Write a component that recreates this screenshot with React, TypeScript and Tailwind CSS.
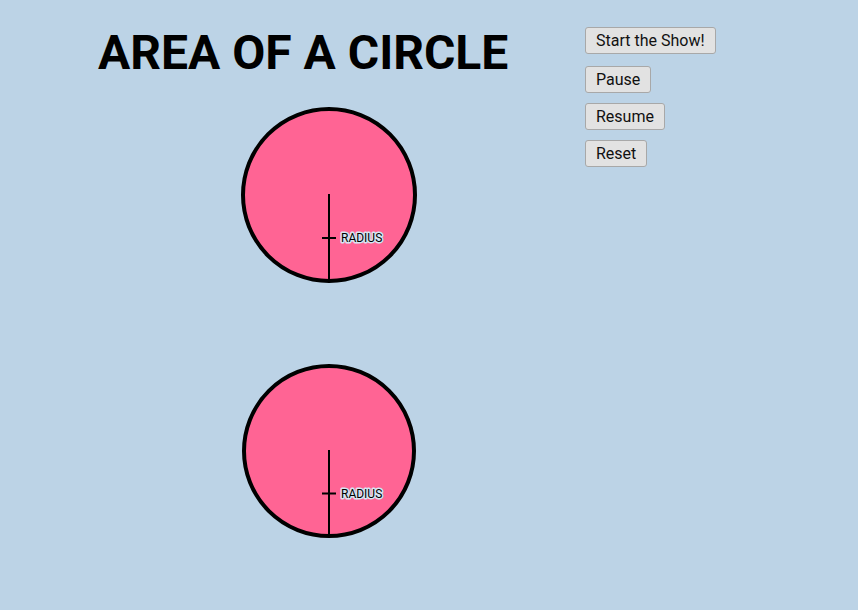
import React from 'react';

const Circle: React.FC<{ cy: number; r: number; cx: number }> = ({ cx, cy, r }) => {
  const tickY = cy + r / 2;
  return (
    <g>
      <circle cx={cx} cy={cy} r={r} fill="#ff6494" stroke="#000" strokeWidth={4} />
      <line x1={cx} y1={cy - 1} x2={cx} y2={cy + r} stroke="#000" strokeWidth={2} />
      <line x1={cx - 7} y1={tickY} x2={cx + 7} y2={tickY} stroke="#000" strokeWidth={2} />
      <text
        x={cx + 12}
        y={tickY + 4}
        fontSize={12}
        fontFamily="Roboto, 'Liberation Sans', sans-serif"
        fill="#000"
        stroke="#d6e5f1"
        strokeWidth={3}
        strokeLinejoin="round"
        paintOrder="stroke"
      >
        RADIUS
      </text>
    </g>
  );
};

const App: React.FC = () => {
  const buttons = [
    { label: 'Start the Show!', gap: 'mt-0' },
    { label: 'Pause', gap: 'mt-[12px]' },
    { label: 'Resume', gap: 'mt-[10px]' },
    { label: 'Reset', gap: 'mt-[10px]' },
  ];

  return (
    <div className="flex h-[610px] w-full bg-[#bcd3e6] font-['Roboto','Liberation_Sans',sans-serif] overflow-hidden">
      <div className="w-[585px] shrink-0">
        <h1 className="pl-[98px] pt-[29px] text-[48px] leading-none font-bold text-black">
          AREA OF A CIRCLE
        </h1>
        <svg width="585" height="481" viewBox="0 77 585 481" className="block">
          <Circle cx={329} cy={195} r={86} />
          <Circle cx={329} cy={451} r={85} />
        </svg>
      </div>
      <div className="flex flex-col items-start pt-[27px]">
        {buttons.map((b) => (
          <button
            key={b.label}
            className={`${b.gap} h-[27px] px-[10px] rounded-[3px] border border-[#a8a8a8] bg-[#e2e2e2] text-[16px] leading-none text-[#111]`}
          >
            {b.label}
          </button>
        ))}
      </div>
    </div>
  );
};

export default App;
